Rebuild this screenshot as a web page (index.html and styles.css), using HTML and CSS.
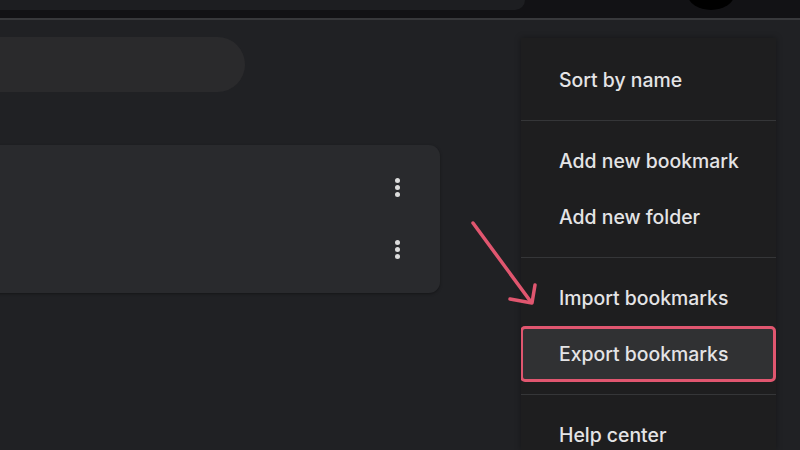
FILE: index.html
```html
<!DOCTYPE html>
<html lang="en">
  <head>
    <meta charset="UTF-8" />
    <meta name="viewport" content="width=device-width, initial-scale=1.0" />
    <title>Bookmarks</title>
    <link rel="stylesheet" href="styles.css">
  </head>
  <body>
    <div class="topbar">
      <div class="omnibox"></div>
      <div class="avatar"></div>
    </div>

    <div class="page">
      <div class="search-field"></div>

      <div class="bookmark-card">
        <div class="bookmark-row">
          <span class="kebab"><i></i><i></i><i></i></span>
        </div>
        <div class="bookmark-row">
          <span class="kebab"><i></i><i></i><i></i></span>
        </div>
      </div>
    </div>

    <div class="menu">
      <div class="menu-section first">
        <div class="menu-item">Sort by name</div>
      </div>
      <div class="menu-section">
        <div class="menu-item">Add new bookmark</div>
        <div class="menu-item">Add new folder</div>
      </div>
      <div class="menu-section">
        <div class="menu-item">Import bookmarks</div>
        <div class="menu-item highlight">Export bookmarks</div>
      </div>
      <div class="menu-section">
        <div class="menu-item">Help center</div>
      </div>
    </div>

    <!-- pointer drawn over the screenshot -->
    <svg class="pointer" width="80" height="100" viewBox="0 0 80 100">
      <path d="M3 3 L61 82" stroke="#e0566f" stroke-width="3.5" stroke-linecap="round" fill="none" />
      <path d="M40 79 L62 83 L65 65" stroke="#e0566f" stroke-width="3.5" stroke-linecap="round" stroke-linejoin="round" fill="none" />
    </svg>
  </body>
</html>
```

FILE: styles.css
```css
:root {
  --page-bg: #202124;
  --card-bg: #292a2d;
  --menu-bg: #1e1e1f;
  --divider: #353638;
  --text: #e4e4e6;
  --accent: #e0566f;
}

* {
  box-sizing: border-box;
  margin: 0;
  padding: 0;
}

body {
  width: 800px;
  height: 450px;
  overflow: hidden;
  position: relative;
  background: var(--page-bg);
  font-family: Inter, "Open Sans", sans-serif;
}

.topbar {
  height: 20px;
  background: #121215;
  border-bottom: 2px solid #38393c;
  position: relative;
  overflow: hidden;
}

.omnibox {
  width: 525px;
  height: 10px;
  background: #1d1e21;
  border-radius: 0 0 14px 0;
}

.avatar {
  position: absolute;
  left: 688px;
  top: -20px;
  width: 46px;
  height: 30px;
  border-radius: 50%;
  background: #000;
}

.page {
  display: flex;
  flex-direction: column;
}

.search-field {
  width: 285px;
  height: 55px;
  margin: 17px 0 0 -40px;
  background: #2a2a2c;
  border-radius: 28px;
}

.bookmark-card {
  width: 480px;
  margin: 53px 0 0 -40px;
  padding: 11px 0 13px;
  background: var(--card-bg);
  border-radius: 11px;
  box-shadow: 0 1px 3px rgba(0, 0, 0, 0.35);
}

.bookmark-row {
  height: 62px;
  display: flex;
  align-items: center;
  justify-content: flex-end;
  padding-right: 40px;
}

.kebab {
  display: flex;
  flex-direction: column;
  gap: 2px;
}

.kebab i {
  width: 5px;
  height: 5px;
  border-radius: 50%;
  background: #dcdcdc;
}

.pointer {
  position: absolute;
  left: 470px;
  top: 220px;
}

.menu {
  position: absolute;
  left: 521px;
  top: 38px;
  width: 255px;
  height: 412px;
  overflow: hidden;
  background: var(--menu-bg);
  box-shadow: 0 0 6px rgba(0, 0, 0, 0.35);
}

.menu-section {
  padding: 12px 0;
  border-top: 1px solid var(--divider);
}

.menu-section.first {
  padding-top: 14px;
  border-top: none;
}

.menu-item {
  height: 56px;
  display: flex;
  align-items: center;
  padding-left: 38px;
  font-size: 19.4px;
  font-weight: 500;
  color: var(--text);
}

.menu-item.highlight {
  margin-left: -1px;
  padding-left: 36px;
  background: #303133;
  border: 3px solid var(--accent);
  border-radius: 5px;
}
```
